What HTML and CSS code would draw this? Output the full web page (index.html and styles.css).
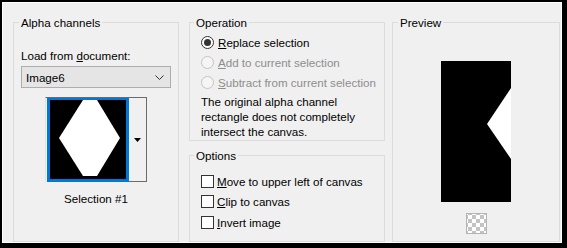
FILE: index.html
```html
<!DOCTYPE html>
<html lang="en">
<head>
    <meta charset="UTF-8">
    <title>Alpha Channel Selection</title>
    <link rel="stylesheet" href="styles.css">
</head>
<body>
    <div class="dialog">
        <div class="dialog-inner">
            <fieldset class="group alpha">
                <legend>Alpha channels</legend>
                <div class="field-label">Load from <u>d</u>ocument:</div>
                <div class="combo">
                    <span>Image6</span>
                    <svg class="chevron" width="9" height="5" viewBox="0 0 9 5">
                        <polyline points="0.5,0.5 4.5,4.5 8.5,0.5" fill="none" stroke="#333" stroke-width="1"/>
                    </svg>
                </div>
                <div class="thumb-picker">
                    <div class="thumb">
                        <svg width="76" height="76" viewBox="0 0 76 76">
                            <rect width="76" height="76" fill="#000"/>
                            <polygon points="33,0 47,0 70,38 47,76 33,76 9,38" fill="#fff"/>
                        </svg>
                    </div>
                    <div class="thumb-arrow">
                        <svg width="7" height="4" viewBox="0 0 7 4">
                            <polygon points="0,0 7,0 3.5,4" fill="#000"/>
                        </svg>
                    </div>
                </div>
                <div class="thumb-caption">Selection #1</div>
            </fieldset>

            <div class="middle">
                <fieldset class="group operation">
                    <legend>Operation</legend>
                    <div class="choice">
                        <span class="radio checked"></span>
                        <span><u>R</u>eplace selection</span>
                    </div>
                    <div class="choice disabled">
                        <span class="radio"></span>
                        <span><u>A</u>dd to current selection</span>
                    </div>
                    <div class="choice disabled">
                        <span class="radio"></span>
                        <span><u>S</u>ubtract from current selection</span>
                    </div>
                    <p class="note">The original alpha channel<br>rectangle does not completely<br>intersect the canvas.</p>
                </fieldset>

                <fieldset class="group options">
                    <legend>Options</legend>
                    <div class="choice check-row">
                        <span class="checkbox"></span>
                        <span><u>M</u>ove to upper left of canvas</span>
                    </div>
                    <div class="choice check-row">
                        <span class="checkbox"></span>
                        <span><u>C</u>lip to canvas</span>
                    </div>
                    <div class="choice check-row">
                        <span class="checkbox"></span>
                        <span><u>I</u>nvert image</span>
                    </div>
                </fieldset>
            </div>

            <fieldset class="group preview">
                <legend>Preview</legend>
                <svg class="preview-image" width="70" height="141" viewBox="0 0 70 141">
                    <rect width="70" height="141" fill="#000"/>
                    <polygon points="70,27 46,63 70,98" fill="#fff"/>
                </svg>
                <div class="checker"></div>
            </fieldset>
        </div>
    </div>
</body>
</html>
```

FILE: styles.css
```css
* {
    box-sizing: border-box;
}

body {
    margin: 0;
    font-family: 'Liberation Sans', Arial, sans-serif;
    font-size: 11.6px;
    color: #000;
}

.dialog {
    width: 567px;
    height: 248px;
    border-style: solid;
    border-color: #000;
    border-width: 2px 5px 5px 2px;
    background: #000;
}

.dialog-inner {
    height: 100%;
    border: 1px solid #fff;
    background: #f0f0f0;
    padding: 12px 1px 0 10px;
    display: flex;
}

.group {
    margin: 0;
    border: 1px solid #dcdcdc;
    min-width: 0;
}

.group legend {
    padding: 0 2px;
    line-height: 15px;
}

/* left column */
.alpha {
    width: 166px;
    padding: 0 7px;
}

.alpha legend {
    margin-left: -2px;
}

.field-label {
    margin-top: 18px;
    line-height: 15px;
}

.combo {
    margin-top: 3px;
    height: 22px;
    width: 150px;
    border: 1px solid #adadad;
    background: #e5e5e5;
    display: flex;
    align-items: center;
    justify-content: space-between;
    padding: 0 6px 0 4px;
}

.thumb-picker {
    margin: 9px auto 0;
    width: 102px;
    height: 85px;
    display: flex;
    border: 1px solid #6b6b6b;
    border-left-color: #e3e3e3;
    border-bottom: none;
    padding-left: 1px;
}

.thumb {
    width: 82px;
    height: 84px;
    border: 3px solid #0078d7;
    border-top-width: 2px;
    background: #000;
}

.thumb svg {
    display: block;
}

.thumb-arrow {
    flex: 1;
    display: flex;
    align-items: center;
    justify-content: center;
    border-bottom: 1px solid #6b6b6b;
    padding-top: 1px;
}

.thumb-caption {
    margin-top: 9px;
    text-align: center;
    line-height: 15px;
}

/* middle column */
.middle {
    width: 196px;
    margin-left: 10px;
    display: flex;
    flex-direction: column;
}

.operation {
    height: 126px;
    padding: 0 2px 0 11px;
}

.operation legend,
.options legend {
    margin-left: -7px;
}

.choice {
    height: 20px;
    display: flex;
    align-items: center;
    gap: 4px;
    white-space: nowrap;
}

.operation .choice:first-of-type {
    margin-top: 2px;
}

.choice.disabled {
    color: #8d8d8d;
}

.radio {
    flex: none;
    width: 13px;
    height: 13px;
    border-radius: 50%;
    border: 1px solid #333;
    background: #fff;
    display: flex;
    align-items: center;
    justify-content: center;
}

.radio.checked::after {
    content: "";
    width: 7px;
    height: 7px;
    border-radius: 50%;
    background: #333;
}

.disabled .radio {
    border-color: #c4c4c4;
    background: #f5f5f5;
}

.note {
    margin: 2px 0 0;
    line-height: 15px;
    white-space: nowrap;
}

.options {
    flex: 1;
    margin-top: 7px;
    padding: 0 4px 0 11px;
}

.check-row {
    height: 20.5px;
}

.options .check-row:first-of-type {
    margin-top: 8px;
}

.checkbox {
    flex: none;
    width: 13px;
    height: 13px;
    border: 1px solid #333;
    background: #fff;
    margin-right: -1px;
}

/* right column */
.preview {
    width: 168px;
    margin-left: 7px;
    padding: 0;
    display: flex;
    flex-direction: column;
    align-items: center;
}

.preview legend {
    margin-left: 5px;
}

.preview-image {
    display: block;
    margin-top: 31px;
}

.checker {
    margin-top: 11px;
    width: 21px;
    height: 21px;
    border: 1px solid #b4b4b4;
    background-color: #fff;
    background-image: conic-gradient(#c3c3c3 25%, #fff 0 50%, #c3c3c3 0 75%, #fff 0);
    background-size: 8px 8px;
    background-position: 1px 1px;
}
```
